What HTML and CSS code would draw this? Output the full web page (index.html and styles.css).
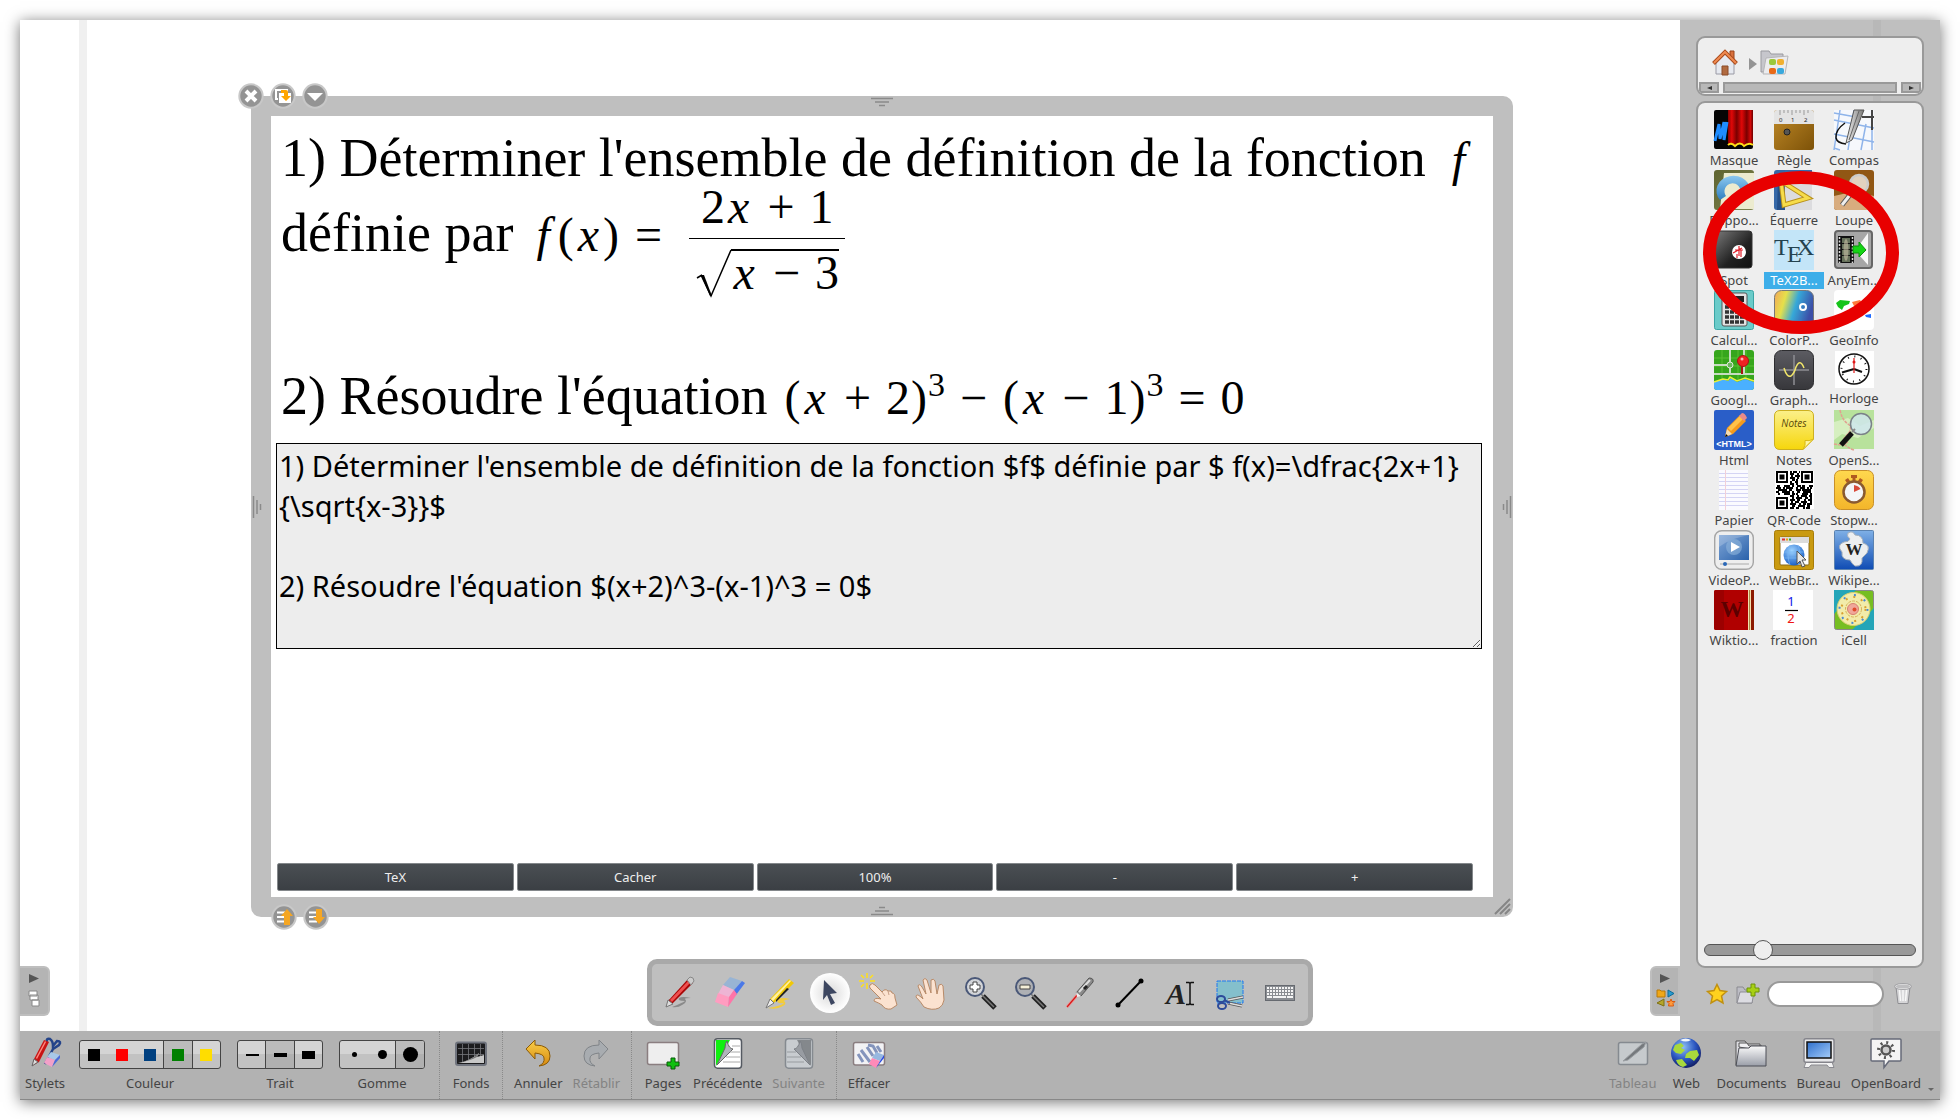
FILE: index.html
```html
<!DOCTYPE html>
<html lang="fr">
<head>
<meta charset="utf-8">
<meta name="viewport" content="width=device-width, initial-scale=1">
<title>OpenBoard</title>
<link rel="stylesheet" href="styles.css">
</head>
<body>
<svg class="defs" width="0" height="0" aria-hidden="true">
  <defs>
    <linearGradient id="g-red" x1="0" x2="1" y1="0" y2="0"><stop offset="0" stop-color="#8a0000"/><stop offset=".15" stop-color="#e00808"/><stop offset=".35" stop-color="#7a0000"/><stop offset=".55" stop-color="#e00808"/><stop offset=".75" stop-color="#7a0000"/><stop offset=".9" stop-color="#d00808"/><stop offset="1" stop-color="#6a0000"/></linearGradient>
    <linearGradient id="g-wood" x1="0" x2="1" y1="0" y2="1"><stop offset="0" stop-color="#c08a28"/><stop offset="1" stop-color="#7d5208"/></linearGradient>
    <linearGradient id="g-olive" x1="0" x2="1" y1="0" y2="1"><stop offset="0" stop-color="#5f6430"/><stop offset="1" stop-color="#7d8350"/></linearGradient>
    <linearGradient id="g-steel" x1="0" x2="1" y1="0" y2="0"><stop offset="0" stop-color="#f2f2f2"/><stop offset="1" stop-color="#777"/></linearGradient>
    <linearGradient id="g-dark" x1="0" x2="1" y1="0" y2="1"><stop offset="0" stop-color="#7a7a7a"/><stop offset=".6" stop-color="#222"/><stop offset="1" stop-color="#111"/></linearGradient>
    <linearGradient id="g-sky" x1="0" x2="0" y1="0" y2="1"><stop offset="0" stop-color="#8cc8f0"/><stop offset="1" stop-color="#2f7fc0"/></linearGradient>
    <linearGradient id="g-rain" x1="0" x2="1" y1="0" y2=".3"><stop offset="0" stop-color="#f2a65a"/><stop offset=".3" stop-color="#e6e04a"/><stop offset=".6" stop-color="#36a8d8"/><stop offset="1" stop-color="#3c4fa8"/></linearGradient>
    <linearGradient id="g-graph" x1="0" x2="0" y1="0" y2="1"><stop offset="0" stop-color="#5c5c62"/><stop offset="1" stop-color="#37373b"/></linearGradient>
    <linearGradient id="g-note" x1="0" x2="0" y1="0" y2="1"><stop offset="0" stop-color="#fbf08a"/><stop offset="1" stop-color="#f6d60c"/></linearGradient>
    <linearGradient id="g-amber" x1="0" x2="0" y1="0" y2="1"><stop offset="0" stop-color="#ffd84e"/><stop offset="1" stop-color="#f3b52a"/></linearGradient>
    <linearGradient id="g-vid" x1="0" x2="1" y1="0" y2="1"><stop offset="0" stop-color="#7fa5d6"/><stop offset="1" stop-color="#2a62ab"/></linearGradient>
    <linearGradient id="g-wiki" x1="0" x2="0" y1="0" y2="1"><stop offset="0" stop-color="#7fb0e6"/><stop offset="1" stop-color="#0f4cb4"/></linearGradient>
    <linearGradient id="g-orange" x1="0" x2="0" y1="0" y2="1"><stop offset="0" stop-color="#f9cf4a"/><stop offset="1" stop-color="#d88a10"/></linearGradient>
    <linearGradient id="g-silver" x1="0" x2="0" y1="0" y2="1"><stop offset="0" stop-color="#fafafa"/><stop offset="1" stop-color="#9a9ea8"/></linearGradient>
    <linearGradient id="g-screen" x1="0" x2="1" y1="0" y2="1"><stop offset="0" stop-color="#2e6fcc"/><stop offset="1" stop-color="#a5cdfa"/></linearGradient>
    <radialGradient id="g-ball" cx=".4" cy=".3" r=".7"><stop offset="0" stop-color="#9fd4ff"/><stop offset="1" stop-color="#1c62c8"/></radialGradient>
    <radialGradient id="g-earth" cx=".4" cy=".3" r=".7"><stop offset="0" stop-color="#8fc0f5"/><stop offset=".6" stop-color="#2a55c0"/><stop offset="1" stop-color="#12206a"/></radialGradient>
    <radialGradient id="g-spot"><stop offset=".3" stop-color="#e4e4e4"/><stop offset="1" stop-color="#fff"/></radialGradient>
  </defs>
</svg>

<div class="screen">
  <div class="workspace">
    <main class="board">
      <section class="widget" aria-label="TeX2Board">
        <div class="handles handles-top">
          <button class="round" aria-label="Fermer"><svg viewBox="0 0 26 26"><circle cx="13" cy="13" r="11.7" fill="#949494" stroke="#c8c8c8" stroke-width="2"/><path d="M8 8l10 10M18 8L8 18" stroke="#fff" stroke-width="4"/></svg></button>
          <button class="round" aria-label="Dupliquer"><svg viewBox="0 0 26 26"><circle cx="13" cy="13" r="11.7" fill="#949494" stroke="#c8c8c8" stroke-width="2"/><path d="M8 16H6V7h11v2" fill="none" stroke="#fff" stroke-width="2"/><path d="M9 10h12v10H9z" fill="#fff"/><path d="M11 7h5q2 0 2 2v4h3l-5 5-5-5h3v-3h-3z" fill="#ffa500"/></svg></button>
          <button class="round" aria-label="Menu"><svg viewBox="0 0 26 26"><circle cx="13" cy="13" r="11.7" fill="#949494" stroke="#c8c8c8" stroke-width="2"/><path d="M5 10h16l-8 8z" fill="#fff"/></svg></button>
        </div>
        <svg class="grip grip-top" viewBox="0 0 22 10"><path d="M0 1.500h22M4 5h14M8 8.500h6" stroke="#8a8a8a" stroke-width="1.500"/></svg>
        <svg class="grip grip-bottom" viewBox="0 0 22 10"><path d="M0 8.500h22M4 5h14M8 1.500h6" stroke="#8a8a8a" stroke-width="1.500"/></svg>
        <svg class="grip grip-left" viewBox="0 0 10 22"><path d="M1.500 0v22M5 4v14M8.500 8v6" stroke="#8a8a8a" stroke-width="1.500"/></svg>
        <svg class="grip grip-right" viewBox="0 0 10 22"><path d="M8.500 0v22M5 4v14M1.500 8v6" stroke="#8a8a8a" stroke-width="1.500"/></svg>
        <svg class="grip grip-corner" viewBox="0 0 18 18"><path d="M1 16L16 1M6 16L16 6M11 16l5-5" stroke="#858585" stroke-width="2"/></svg>

        <div class="formula">
          <p class="line"><span>1) Déterminer l'ensemble de définition de la fonction</span> <i class="math var-f">f</i></p>
          <div class="line line-fraction">
            <p class="lead"><span>définie par</span> <span class="math"><i class="var-f">f</i><b>(</b><i>x</i><b>)</b><span class="op">=</span></span></p>
            <div class="math fraction">
              <span class="numerator">2<i>x</i><span class="op">+</span>1</span>
              <span class="root"><svg class="radical" viewBox="0 0 35 48"><path d="M1 29l5-3" stroke="#000" stroke-width="1.500" fill="none"/><path d="M5 26l10 21L35 1" fill="none" stroke="#000" stroke-width="1.500"/><path d="M5 26l9 21h2L8 26z"/></svg><span class="radicand"><i>x</i><span class="op">−</span>3</span></span>
            </div>
          </div>
          <p class="line line-last"><span>2) Résoudre l'équation</span> <span class="math"><b>(</b><i>x</i><span class="op">+</span>2<b>)</b><sup>3</sup><span class="op">−</span><b>(</b><i>x</i><span class="op">−</span>1<b>)</b><sup>3</sup><span class="op">=</span>0</span></p>
        </div>
        <textarea class="source" aria-label="Source TeX" spellcheck="false">1) Déterminer l'ensemble de définition de la fonction $f$ définie par $ f(x)=\dfrac{2x+1}{\sqrt{x-3}}$

2) Résoudre l'équation $(x+2)^3-(x-1)^3 = 0$</textarea>
        <div class="actions">
          <button>TeX</button><button>Cacher</button><button>100%</button><button>-</button><button>+</button>
        </div>
        <div class="handles handles-bottom">
          <button class="round" aria-label="Monter"><svg viewBox="0 0 26 26"><circle cx="13" cy="13" r="11.700" fill="#949494" stroke="#c8c8c8" stroke-width="2"/><path d="M6 8.500h8M6 13h8M6 17.500h8" stroke="#fff" stroke-width="2"/><path d="M16 5l6 7h-3v9h-6v-9h-3z" fill="#f5a623"/></svg></button>
          <button class="round" aria-label="Descendre"><svg viewBox="0 0 26 26"><circle cx="13" cy="13" r="11.700" fill="#949494" stroke="#c8c8c8" stroke-width="2"/><path d="M6 8.500h8M6 13h8M6 17.500h8" stroke="#fff" stroke-width="2"/><path d="M16 20l6-7h-3V5h-6v8h-3z" fill="#f5a623"/></svg></button>
        </div>
      </section>
      <button class="tab tab-left" aria-label="Pages"><svg viewBox="0 0 30 50"><path d="M9 8l10 4.500L9 17z" fill="#555"/><path d="M9 25h8v5H9zM10 29h8v5h-8zM12 34h7v6h-7z" fill="#fff" stroke="#888"/></svg></button>
      <button class="tab tab-right" aria-label="Bibliothèque"><svg viewBox="0 0 30 50"><path d="M10 8l10 4.500L10 17z" fill="#555"/><path d="M7 24h3l1 1h4v6H7z" fill="#f0a818" stroke="#b87808"/><path d="M18 24l6 3.500-6 3.500z" fill="#2a9bd0" stroke="#0a6a98"/><path d="M14 33v7l-7-3z" fill="#b5a62a" stroke="#7d7014"/><path d="M21 33l1 2.500h3l-2 2 .5 2.500h-5l.5-2.500-2-2h3z" fill="#ff9a3c" stroke="#d85a10"/></svg></button>
    </main>

    <aside class="library">
      <nav class="crumbs" aria-label="Chemin">
        <div class="path">
          <a href="#" aria-label="Accueil"><svg width="26" height="28" viewBox="0 0 26 28"><path d="M18 2h4v9h-4z" fill="#d8703c" stroke="#9a4218"/><path d="M4 14v11h18V14l-9-9z" fill="#e6e9f0" stroke="#9a9aa5"/><path d="M10 17h6v9h-6z" fill="#b06a40" stroke="#8a4a28"/><path d="M1.500 14.500L13 3l11.500 11.500" fill="none" stroke="#a84a1c" stroke-width="4"/><path d="M2 14L13 3l11 11" fill="none" stroke="#f08a50" stroke-width="2"/></svg></a>
          <svg class="next" width="8" height="12" viewBox="0 0 8 12"><path d="M0 0l8 6-8 6z" fill="#949494"/></svg>
          <a href="#" aria-label="Applications"><svg width="28" height="26" viewBox="0 0 28 26"><path d="M1 22V1h8l2 3h12v18z" fill="#c6c6cc" stroke="#9a9aa0"/><path d="M3 24L6 8l22-2-3 18z" fill="#ececee" stroke="#b5b5b8"/><rect x="9" y="9" width="7" height="6" rx="2" fill="#9cc83c"/><rect x="17" y="9" width="7" height="6" rx="2" fill="#f0b030"/><rect x="9" y="18" width="7" height="6" rx="2" fill="#e86a18"/><rect x="17" y="18" width="7" height="6" rx="2" fill="#38a8dc"/></svg></a>
        </div>
        <div class="scroller">
          <button aria-label="Gauche"><svg width="5" height="4" viewBox="0 0 5 4"><path d="M5 0v4L0 2z" fill="#333"/></svg></button>
          <div class="scroll-thumb"></div>
          <button aria-label="Droite"><svg width="5" height="4" viewBox="0 0 5 4"><path d="M0 0v4l5-2z" fill="#333"/></svg></button>
        </div>
      </nav>

      <section class="shelf">
        <ul class="apps">
          <li><a href="#"><svg viewBox="0 0 40 40"><rect width="39" height="39" rx="2" fill="#050505"/><path d="M14 0h25v35q-4-5-8 1-5-5-9 0-4-4-8-2z" fill="url(#g-red)"/><path d="M14 35q3-3 7 1 5-5 9 0 5-4 9-1" fill="none" stroke="#ffe01a" stroke-width="2"/><path d="M1 31L5 14l1 15 4-17v18l3-18" fill="none" stroke="#1e8cff" stroke-width="3"/></svg>Masque</a></li>
          <li><a href="#"><svg viewBox="0 0 40 40"><rect width="40" height="40" rx="3" fill="url(#g-wood)"/><path d="M0 14V3q0-3 3-3h34q3 0 3 3v11z" fill="#e4e4e4"/><path d="M6 0v5M10 0v3M14 0v3M18 0v5M22 0v3M26 0v3M30 0v5M34 0v3" stroke="#999"/><circle cx="13" cy="22" r="3" fill="#555" stroke="#222"/><g font-family="Noto Sans" font-size="6" fill="#222"><text x="5" y="12">0</text><text x="17" y="12">1</text><text x="30" y="12">2</text></g></svg>Règle</a></li>
          <li><a href="#"><svg viewBox="0 0 40 40"><rect width="40" height="40" fill="#f6f8fc"/><path d="M0 10l40 8M0 24l40 8M6 0L0 40M20 0l-6 40M32 14l-5 26M0 3l22 4M0 38l6 2M38 10v30" stroke="#8fb4ea" stroke-width="1.500"/><path d="M11 13Q1 20 2 28q1 5 10 6" fill="none" stroke="#111" stroke-width="1.500"/><path d="M20 0h10L18 30l-6 3z" fill="url(#g-steel)" stroke="#555"/><path d="M25 1L15 30" stroke="#666"/><path d="M28 7h12M38 0v20" stroke="#444" stroke-width="2"/></svg>Compas</a></li>
          <li><a href="#"><svg viewBox="0 0 40 40"><rect width="40" height="40" rx="3" fill="url(#g-olive)"/><path d="M10 3h30v36H6z" fill="#ecebcf"/><path d="M6 30a17 15 0 1 1 30-6H26a8 8 0 1 0-14 2z" fill="url(#g-sky)"/></svg>Rappo...</a></li>
          <li><a href="#"><svg viewBox="0 0 40 40"><path d="M3 0h35v40H3q-3 0-3-3V3q0-3 3-3z" fill="#dcdcde"/><path d="M3 0h8v40H3q-3 0-3-3V3q0-3 3-3z" fill="#3568a8"/><path d="M11 0h27v9H11z" fill="#356cae"/><path d="M4 6l7 34H3z" fill="#24508a"/><path d="M7 11L34 28 10 35z" fill="none" stroke="#b8901a" stroke-width="5"/><path d="M7 11L34 28 10 35z" fill="none" stroke="#f6dc4a" stroke-width="3"/></svg>Équerre</a></li>
          <li><a href="#"><svg viewBox="0 0 40 40"><rect width="40" height="40" rx="3" fill="#915714"/><path d="M0 26q20-6 40 0v11q0 3-3 3H3q-3 0-3-3z" fill="#d8ac7e"/><circle cx="25" cy="14" r="9" fill="#e2d2bf" stroke="#ccc" stroke-width="2.500"/><path d="M19 21L8 35" stroke="#555" stroke-width="5"/><path d="M19 21L8 35" stroke="#eee" stroke-width="3"/></svg>Loupe</a></li>
          <li><a href="#"><svg viewBox="0 0 40 40"><rect x="1" y="1" width="37" height="37" rx="3" fill="url(#g-dark)" stroke="#333"/><circle cx="25" cy="22" r="7" fill="#fff"/><path d="M19 23l9-5M25 16v10M21 20h8M27 20v7M23 28v-4" stroke="#e0202a" stroke-width="1.200"/></svg>Spot</a></li>
          <li class="selected"><a href="#"><svg viewBox="0 0 40 40"><rect width="40" height="40" fill="#c3e5f8"/><g font-family="Liberation Serif" font-size="24" fill="#24424f"><text x="0" y="25">T</text><text x="13" y="32">E</text><text x="23" y="25">X</text></g></svg>TeX2B...</a></li>
          <li><a href="#"><svg viewBox="0 0 40 40"><rect x="1" y="1" width="37" height="37" rx="3" fill="#a6a6a6" stroke="#666" stroke-width="2"/><path d="M26 14L34 3v32l-8-9z" fill="#f6f6f6"/><path d="M4 6h16v27H4z" fill="#111"/><path d="M5.500 7v26M18.500 7v26" stroke="#ddd" stroke-width="1.500" stroke-dasharray="2 1.500"/><path d="M8 8h8v5H8zM8 14h8v5H8zM8 20h8v5H8zM8 26h8v6H8z" fill="#65705a"/><ellipse cx="12" cy="20" rx="2.500" ry="11" fill="#c9c0a5" opacity=".6"/><path d="M19 16h6v-4l7 8-7 7v-4h-6z" fill="#14d414" stroke="#0a900a"/></svg>AnyEm...</a></li>
          <li><a href="#"><svg viewBox="0 0 40 40"><rect x=".5" y=".5" width="39" height="39" rx="2" fill="#6acbc9" stroke="#3aa5a5"/><rect x="8" y="3" width="25" height="33" rx="2" fill="#e2e2e2" stroke="#555"/><path d="M11 6h19v6H11z" fill="#222"/><path d="M11 17h19M11 22h19M11 27h19M11 32h19" stroke="#333" stroke-width="3.500" stroke-dasharray="4 1"/></svg>Calcul...</a></li>
          <li><a href="#"><svg viewBox="0 0 40 40"><rect x=".5" y=".5" width="39" height="39" rx="7" fill="url(#g-rain)" stroke="#777"/><circle cx="29" cy="17" r="3" fill="none" stroke="#fff" stroke-width="2"/></svg>ColorP...</a></li>
          <li><a href="#"><svg viewBox="0 0 40 40"><rect width="40" height="40" rx="4" fill="#fff"/><path d="M2 13l4-3 10 1-1 3-5 2-2 4-4-3zM9 22l5 2-2 8-2-2z" fill="#16c41a"/><path d="M18 12l8-2 2 3-4 4-4-1z" fill="#ff7a3c"/><path d="M18 20l6-1 1 5-4 6z" fill="#f5c000"/><path d="M26 12l12 1v5l-8 4z" fill="#e83a3a"/><path d="M31 25l6-1v4l-5-1z" fill="#1e6aff"/></svg>GeoInfo</a></li>
          <li><a href="#"><svg viewBox="0 0 40 40"><rect width="40" height="40" rx="3" fill="#36a61c"/><path d="M0 8h40M0 16h40M8 0v30M24 0v30M32 0v30" stroke="#58c030"/><path d="M16 0v24M0 24h40M30 0v24M0 15h16" stroke="#c6dcc0" stroke-width="2"/><circle cx="16" cy="15" r="3" fill="#6ab85a" stroke="#dfe8da"/><path d="M0 32l9-3 5 2 3-3 6 4 8-3 9 3v5q0 3-3 3H3q-3 0-3-3z" fill="#4ab0ff"/><path d="M0 32l9-3 5 1 2-3 7 4 8-3 9 3" fill="none" stroke="#eaf03c" stroke-width="1.500"/><path d="M28 24V15" stroke="#a81414" stroke-width="2"/><circle cx="29" cy="11" r="5.500" fill="#ee2222" stroke="#a81414"/><circle cx="28" cy="9" r="1.500" fill="#ffb0b0"/></svg>Googl...</a></li>
          <li><a href="#"><svg viewBox="0 0 40 40"><rect x=".5" y=".5" width="39" height="39" rx="7" fill="url(#g-graph)" stroke="#2d2d30"/><path d="M20 5v30M5 20h30" stroke="#8d8d92" stroke-width="1.500"/><path d="M10 18q3 10 7 8 3-2 5-9 4-9 8 1" fill="none" stroke="#f2e66a" stroke-width="1.500"/></svg>Graph...</a></li>
          <li class="short"><a href="#"><svg viewBox="0 0 40 38"><path d="M1 1h39v37H1z" fill="#fff"/><circle cx="20" cy="19" r="15" fill="#fff" stroke="#111" stroke-width="1.500"/><circle cx="20" cy="19" r="12.500" fill="none" stroke="#111" stroke-width="2" stroke-dasharray="1 5.545"/><path d="M20 19L8 22.500M20 19l8 3" stroke="#111" stroke-width="2"/><path d="M20 23V8" stroke="#e01818" stroke-width="1.200"/><circle cx="20" cy="12" r="1.500" fill="#e01818"/></svg>Horloge</a></li>
          <li><a href="#"><svg viewBox="0 0 40 40"><rect width="40" height="40" rx="2" fill="#2a5ec8"/><path d="M11 27l2-9L26 5l6 6-13 13z" fill="#f59a1c"/><path d="M14 18L27 5l3 3-13 13z" fill="#ffc24a"/><path d="M25 6l3-3q3 0 5 5l-3 3z" fill="#e88a8a"/><path d="M11 27l2-8 5 5z" fill="#f5dcb0"/><path d="M11 27l1-3 2 2z"/><text x="20" y="37" font-family="Liberation Sans" font-size="9" font-weight="700" fill="#fff" text-anchor="middle">&lt;HTML&gt;</text></svg>Html</a></li>
          <li><a href="#"><svg viewBox="0 0 40 40"><path d="M6 .5h28q5.500 0 5.500 5.500v23L29 39.500H6Q.5 39.500.5 34V6Q.5.500 6 .5z" fill="url(#g-note)" stroke="#cdb020"/><path d="M29 39.500q3-4 2-9 4 1 8.500-1.500z" fill="#fff6a0" stroke="#d8b818"/><text x="20" y="17" font-family="Open Sans" font-size="10" font-style="italic" fill="#5a4a08" text-anchor="middle">Notes</text></svg>Notes</a></li>
          <li><a href="#"><svg viewBox="0 0 40 40"><path d="M0 0h40v39H0z" fill="#b8e29c"/><path d="M0 12l14-4 12 8 14-6v8L24 28 8 24 0 30z" fill="#d6efc0"/><path d="M6 0q2 10 8 14t-2 12 8 14M0 34q8 2 14-2" fill="none" stroke="#e2a090" stroke-width="1.500" stroke-dasharray="3 1"/><circle cx="27" cy="14" r="10.500" fill="#cfe6ec" fill-opacity=".85" stroke="#7a8288" stroke-width="1.500"/><path d="M18 22l3-3" stroke="#888" stroke-width="2"/><path d="M7 35l11-12" stroke="#111" stroke-width="5"/></svg>OpenS...</a></li>
          <li><a href="#"><svg viewBox="0 0 40 40"><path d="M5 0h29v40H5z" fill="#fafaff"/><path d="M5 3.500h29M5 7.500h29M5 11.500h29M5 15.500h29M5 19.500h29M5 23.500h29M5 27.500h29M5 31.500h29M5 35.500h29" stroke="#d4d4f4"/><path d="M11.500 0v40" stroke="#f2d0d8"/></svg>Papier</a></li>
          <li><a href="#"><svg viewBox="0 0 40 40"><path d="M1 1h39v38H1z" fill="#fff"/><path d="M3 2h10v10H3zM28 2h10v10H28zM3 28h10v10H3z" fill="none" stroke="#000" stroke-width="2"/><path d="M5.500 4.500h5v5h-5zM30.500 4.500h5v5h-5zM5.500 30.500h5v5h-5z"/><g stroke="#000" stroke-width="2"><path d="M16 2h10" stroke-dasharray="2 1 4 2"/><path d="M16 4h10" stroke-dasharray="4 3 2"/><path d="M17 6h9" stroke-dasharray="2 2 5"/><path d="M16 8h10" stroke-dasharray="5 2 2"/><path d="M18 10h8" stroke-dasharray="3 1 2"/><path d="M16 12h10" stroke-dasharray="2 3 3"/><path d="M16 14h8" stroke-dasharray="4 2"/><path d="M3 16h36" stroke-dasharray="3 4 6 2 2 3 4 1"/><path d="M2 18h36" stroke-dasharray="5 2 2 1 7 3 2 2"/><path d="M4 20h34" stroke-dasharray="9 2 3 4 5 1"/><path d="M2 22h36" stroke-dasharray="3 3 8 2 2 3"/><path d="M4 24h34" stroke-dasharray="2 4 6 2 3 1"/><path d="M16 26h22" stroke-dasharray="4 3 2 2 6 2"/><path d="M18 28h20" stroke-dasharray="2 2 6 3 3 2"/><path d="M16 30h22" stroke-dasharray="5 2 3 4 2 2"/><path d="M17 32h21" stroke-dasharray="2 2 4 2 6 3"/><path d="M16 34h22" stroke-dasharray="6 3 2 2 3 1"/><path d="M18 36h20" stroke-dasharray="3 3 7 2"/><path d="M16 38h22" stroke-dasharray="4 2 3 4 2 1"/></g></svg>QR-Code</a></li>
          <li><a href="#"><svg viewBox="0 0 40 40"><rect x=".5" y=".5" width="39" height="39" rx="6" fill="url(#g-amber)" stroke="#c8902a"/><path d="M17 5h6v3h-6zM18.500 7h3v4h-3zM11 10l3-2 2 3-3 2zM29 10l-3-2-2 3 3 2z" fill="#b05a20"/><circle cx="20" cy="22" r="10.500" fill="#f4f6f8" stroke="#8a5a30" stroke-width="2.500"/><path d="M20 22v-7q5 1 6.500 4z" fill="#d84a3a"/></svg>Stopw...</a></li>
          <li><a href="#"><svg viewBox="0 0 40 40"><rect x=".7" y=".7" width="38.600" height="38.600" rx="7" fill="#eee" stroke="#a5a5a5" stroke-width="1.400"/><path d="M5 5h30v25H5z" fill="url(#g-vid)"/><path d="M5 5h30q-18 3-30 12z" fill="#fff" opacity=".2"/><circle cx="20" cy="17" r="8" fill="#8fb5dc" opacity=".6"/><path d="M17 12l9 5-9 5z" fill="#fff"/><path d="M6 34h29" stroke="#aaa"/><circle cx="11" cy="34" r="2" fill="#2a68b8"/></svg>VideoP...</a></li>
          <li><a href="#"><svg viewBox="0 0 40 40"><rect x=".5" y=".5" width="39" height="39" rx="2" fill="#c99a10" stroke="#a87c08"/><rect x="6" y="7" width="29" height="28" rx="1" fill="#fff" stroke="#8a6a18"/><path d="M6 7h29v6H6z" fill="#dcdcdc"/><path d="M8 9.500h3" stroke="#e03030" stroke-width="2"/><path d="M12 9.500h2" stroke="#f0a010" stroke-width="2"/><path d="M15 9.500h2" stroke="#30b030" stroke-width="2"/><circle cx="20" cy="25" r="10.500" fill="url(#g-ball)"/><path d="M10 22h20M10 28h20M16 15q-4 10 0 20M24 15q4 10 0 20" fill="none" stroke="#7ab8f5" stroke-width=".7"/><path d="M23 21l9 9h-4l3 6-3 1-2-6-3 3z" fill="#e8e8e8" stroke="#555"/></svg>WebBr...</a></li>
          <li><a href="#"><svg viewBox="0 0 40 40"><rect x=".5" y=".5" width="39" height="39" rx="1" fill="url(#g-wiki)" stroke="#5a82b0"/><path d="M14 3q5-3 7 2 8 0 8 8 8 2 4 10-4 4-5 5 1 9-7 8-3-2-5-6-9 0-8-8-6-7 2-10 5 0 6-3-4-3-2-6z" fill="#eceef0" stroke="#a5b0bc"/><text x="20" y="25" font-family="Liberation Serif" font-size="17" font-weight="700" fill="#222" text-anchor="middle">W</text></svg>Wikipe...</a></li>
          <li><a href="#"><svg viewBox="0 0 40 40"><rect width="40" height="40" rx="2" fill="#f2dfae"/><path d="M2 0h32v40H2q-2 0-2-2V2q0-2 2-2z" fill="#b00000"/><path d="M2 0h8v40H2q-2 0-2-2V2q0-2 2-2z" fill="#9c0000"/><path d="M38.500 0v40" stroke="#8c1a00" stroke-width="3"/><path d="M35.500 0v40" stroke="#a88a4a"/><text x="18" y="27" font-family="Liberation Serif" font-size="23" font-weight="700" fill="#5c0000" text-anchor="middle">W</text></svg>Wiktio...</a></li>
          <li><a href="#"><svg viewBox="0 0 40 40"><path d="M-1 0h40v40H-1z" fill="#fff"/><g font-family="Noto Sans" font-size="13" text-anchor="middle"><text x="17" y="16" fill="#1414e8">1</text><text x="17" y="33" fill="#f01414">2</text></g><path d="M11 20.500h13" stroke="#000" stroke-width="1.200"/></svg>fraction</a></li>
          <li><a href="#"><svg viewBox="0 0 40 40"><rect x=".5" y=".5" width="39" height="39" rx="2" fill="#76be22" stroke="#888"/><path d="M0 0h22L0 24zM40 40H18l22-22z" fill="#24a5b8"/><circle cx="19.500" cy="19" r="16.500" fill="#f2ecaa" stroke="#d8d070"/><circle cx="19.500" cy="19" r="12" fill="none" stroke="#d8a030" stroke-width="2" stroke-dasharray="2 6"/><circle cx="19.500" cy="19" r="14" fill="none" stroke="#4a8ad0" stroke-width="2" stroke-dasharray="2 9"/><circle cx="19.500" cy="19" r="8" fill="none" stroke="#d8b05a" stroke-dasharray="3 1"/><circle cx="19" cy="19" r="5.500" fill="#f0a89a" stroke="#d88070"/><circle cx="20.500" cy="19.500" r="2" fill="#e04a2a"/></svg>iCell</a></li>
        </ul>
        <input class="zoom" type="range" min="0" max="100" value="25" aria-label="Taille des vignettes">
      </section>

      <div class="library-tools">
        <button aria-label="Favoris"><svg width="22" height="22" viewBox="0 0 22 22"><path d="M11 1.500l3 6 6.500 1-5 4.500 1.500 7-6-3.500L5 20l1.500-7-5-4.500 6.500-1z" fill="#ffd21e" stroke="#c09010" stroke-width="1.500"/></svg></button>
        <button aria-label="Nouveau dossier"><svg width="24" height="22" viewBox="0 0 24 22"><path d="M1 20V4h6l2 3h7v13z" fill="#bcbcc4" stroke="#8a8a90"/><path d="M1 20L4 9h14l-2 11z" fill="#dcdce2" stroke="#8e8e95"/><path d="M15 1h4v4h4v4h-4v4h-4V9h-4V5h4z" fill="#a8d014" stroke="#6c9408"/></svg></button>
        <input class="search" type="search" aria-label="Rechercher">
        <button aria-label="Corbeille"><svg width="18" height="22" viewBox="0 0 18 22"><path d="M2 4h14l-2 16.500H4z" fill="#d6d6d8" stroke="#8e8e92"/><path d="M5.500 7l1 11M9 7v11M12.500 7l-1 11" stroke="#f8f8f8" stroke-width="1.500"/><ellipse cx="9" cy="3.500" rx="8" ry="2.500" fill="#bebec0" stroke="#f2f2f2"/><ellipse cx="9" cy="3.500" rx="8.500" ry="3" fill="none" stroke="#8a8a8e" stroke-width=".7"/></svg></button>
      </div>
      <div class="callout" aria-hidden="true"></div>
    </aside>
  </div>

  <div class="palette-dock">
    <div class="palette" role="toolbar" aria-label="Outils">
      <button aria-label="Stylo"><svg viewBox="0 0 40 40"><path d="M12 34q10-4 13-6-8 0-6-3 3-2 12 0-6 0-6 1 3 3-3 6-4 3-10 2z" fill="#8a8a8a"/><path d="M6 34l3-8 3 4z" fill="#666"/><path d="M8 28L28 6l5 4-21 21z" fill="#a80808"/><path d="M10 27L29 7l2 2-19 20z" fill="#f05050"/><path d="M27 7l3-3q4 0 4 4l-3 4z" fill="#ccc" stroke="#888"/><path d="M6 34l2-7 5 4z" fill="#ddd" stroke="#777"/></svg></button>
      <button aria-label="Gomme"><svg viewBox="0 0 40 40"><path d="M20 4l12 4-8 9-11-5z" fill="#98b4d4"/><path d="M32 8l3 2-9 12-2-5z" fill="#4a78e8"/><path d="M13 12l11 5-5 8-11-4z" fill="#eeb4d4"/><path d="M8 20l11 4-1 10-13-5z" fill="#ff9cc0"/><path d="M24 17l3 4-9 13 1-10z" fill="#ff74a8"/></svg></button>
      <button aria-label="Marqueur"><svg viewBox="0 0 40 40"><path d="M8 35q13-2 16-5-9 1-6-4 4-2 12 0-6 1-6 2 4 3-3 6-6 3-13 1z" fill="#f2cc3c"/><path d="M10 26L29 6l5 4-21 21z" fill="#f0c808"/><path d="M11 26L30 7l1 1-18 20z" fill="#fff0a0"/><path d="M16 27L27 15l2 1-13 13z" fill="#222"/><path d="M6 35l4-9 4 4z" fill="#eee" stroke="#777"/></svg></button>
      <button class="active" aria-label="Sélection"><svg viewBox="0 0 40 40"><circle cx="20" cy="20" r="20" fill="url(#g-spot)"/><path d="M14 7l13 13-7 1 5 9-4 2-4-10-4 5z" fill="#3c4660"/></svg></button>
      <button aria-label="Interaction"><svg viewBox="0 0 40 40"><path d="M7 0v5M7 10v6M-1 8h5M10 8h5M1 2l3 3M13 2l-3 3M1 14l3-3" stroke="#ffe01a" stroke-width="1.500"/><path d="M10 12q2-3 5 0l7 7q3-4 6-1 4-1 4 2 3 0 3 5l2 7-6 4q-6 1-9-4-3-2-8-4 0-4 7-2L10 15q-1-2 0-3z" fill="#fbe2d0" stroke="#b88a68"/><path d="M22 19l3 4M28 18l1 4" stroke="#c8a088"/></svg></button>
      <button aria-label="Main"><svg viewBox="0 0 40 40"><path d="M14 34q-3-5-8-10 0-4 5 0l2 2L8 13q1-3 4 1l4 7-3-14q2-3 4 0l4 13V7q3-2 4 1l2 13 2-9q3-2 4 1l1 14q-1 6-5 8-7 3-15-1z" fill="#fbe2d0" stroke="#b88a68"/></svg></button>
      <button aria-label="Agrandir"><svg viewBox="0 0 40 40"><path d="M23 23l12 12" stroke="#222" stroke-width="5"/><path d="M21 21l13 13" stroke="#777" stroke-width="1.500"/><circle cx="15" cy="14" r="9" fill="#d2d4d8" stroke="#4a5878" stroke-width="2"/><path d="M13 9h4v3h3v4h-3v3h-4v-3h-3v-4h3z" fill="#fff" stroke="#444"/></svg></button>
      <button aria-label="Réduire"><svg viewBox="0 0 40 40"><path d="M23 23l12 12" stroke="#222" stroke-width="5"/><path d="M21 21l13 13" stroke="#777" stroke-width="1.500"/><circle cx="15" cy="14" r="9" fill="#aeb0b4" stroke="#4a5878" stroke-width="2"/><path d="M10 12h10v4H10z" fill="#f5f0d8" stroke="#444"/></svg></button>
      <button aria-label="Laser"><svg viewBox="0 0 40 40"><path d="M7 34l12-14" stroke="#ff8080" stroke-width="3" opacity=".6"/><path d="M7 34l12-14" stroke="#d81818" stroke-width="1.200"/><path d="M16 20L29 5q5 0 4 4L21 23z" fill="#8a8a8a" stroke="#555"/><path d="M19 19L30 7" stroke="#ddd" stroke-width="2"/><path d="M16 19l5 4-4 1z" fill="#eee"/><path d="M24 16l3-3" stroke="#222" stroke-width="3"/></svg></button>
      <button aria-label="Ligne"><svg viewBox="0 0 40 40"><path d="M8 32L31 8" stroke="#000" stroke-width="2"/><circle cx="8" cy="32" r="2.500"/><circle cx="31" cy="8" r="2.500"/></svg></button>
      <button aria-label="Texte"><svg viewBox="0 0 40 40"><text x="6" y="31" font-family="Liberation Serif" font-size="30" font-weight="700" font-style="italic" fill="#222">A</text><path d="M26 9.500h3l1 1 1-1h3M30 10v21M26 31.500h3l1-1 1 1h3" fill="none" stroke="#111" stroke-width="1.500"/></svg></button>
      <button aria-label="Capture"><svg viewBox="0 0 40 40"><path d="M7 8h26v22H7z" fill="#84bfcc" stroke="#1e78f0" stroke-dasharray="4 1"/><path d="M18 27l15-3M18 30l14 3" stroke="#555" stroke-width="3"/><path d="M18 27l15-3M18 30l14 3" stroke="#ddd" stroke-width="1.500"/><ellipse cx="11" cy="26" rx="4" ry="3" fill="none" stroke="#2c4a9a" stroke-width="2"/><ellipse cx="12" cy="33" rx="4" ry="3" fill="none" stroke="#2c4a9a" stroke-width="2"/><path d="M14 27l6 3" stroke="#2c4a9a" stroke-width="2"/></svg></button>
      <button aria-label="Clavier"><svg viewBox="0 0 40 40"><rect x="5.500" y="12.500" width="29" height="15" fill="#8a8d92" stroke="#666a70"/><path d="M7 15h26M7 18h26M7 21h26" stroke="#f5f5f5" stroke-width="2" stroke-dasharray="2 1"/><path d="M7 24h5M13 24h13M27 24h6" stroke="#f5f5f5" stroke-width="2"/></svg></button>
    </div>
  </div>

  <footer class="toolbar">
    <button class="tool"><svg viewBox="0 0 36 30"><path d="M20 4q-1-4 3-3 3 2 3 7l4-5q5 0 2 4l-6 4-8 15" fill="none" stroke="#24448a" stroke-width="2.500"/><path d="M5 28l2-7L17 2l5 2-10 20z" fill="#c81414"/><path d="M9 20L18 3l1 1-9 17z" fill="#ff8a80"/><path d="M5 28l2-7 4 3z" fill="#ddd" stroke="#666"/><path d="M24 14l9 3-5 5-8-3z" fill="#a8c8e8"/><path d="M20 19l8 3-3 7-8-4z" fill="#f2a0c8"/><path d="M33 17v3l-8 9 3-7z" fill="#4a6ad8"/></svg>Stylets</button>
    <fieldset class="group">
      <div class="choices">
        <label><input type="radio" name="couleur" aria-label="Noir"><span class="swatch black"></span></label>
        <label><input type="radio" name="couleur" aria-label="Rouge"><span class="swatch red"></span></label>
        <label><input type="radio" name="couleur" aria-label="Bleu"><span class="swatch blue"></span></label>
        <label><input type="radio" name="couleur" aria-label="Vert" checked><span class="swatch green"></span></label>
        <label><input type="radio" name="couleur" aria-label="Jaune"><span class="swatch yellow"></span></label>
      </div>
      <span class="caption">Couleur</span>
    </fieldset>
    <fieldset class="group">
      <div class="choices">
        <label><input type="radio" name="trait" aria-label="Fin"><span class="stroke thin"></span></label>
        <label><input type="radio" name="trait" aria-label="Moyen" checked><span class="stroke medium"></span></label>
        <label><input type="radio" name="trait" aria-label="Épais"><span class="stroke thick"></span></label>
      </div>
      <span class="caption">Trait</span>
    </fieldset>
    <fieldset class="group">
      <div class="choices">
        <label><input type="radio" name="gomme" aria-label="Petite"><span class="dot small"></span></label>
        <label><input type="radio" name="gomme" aria-label="Moyenne"><span class="dot mid"></span></label>
        <label><input type="radio" name="gomme" aria-label="Grande" checked><span class="dot large"></span></label>
      </div>
      <span class="caption">Gomme</span>
    </fieldset>
    <span class="divider"></span>
    <button class="tool"><svg viewBox="0 0 36 30"><rect x="3" y="4.500" width="30" height="22.500" rx="2" fill="#1c1c1e" stroke="#70747e" stroke-width="2"/><path d="M5 10.500h26M5 16.500h26M9.500 6v19M15.500 6v19M21.500 6v19M27.500 6v19" stroke="#77797c" stroke-width=".8"/><path d="M5 25q12-2 21-10l-2 4 7-2v8z" fill="#c8c8c8"/><path d="M5 25q12-2 21-10l-2 4q-8 4-19 6z" fill="#777"/></svg>Fonds</button>
    <span class="divider"></span>
    <button class="tool"><svg viewBox="0 0 36 30"><path d="M6 11L15 2v5q15 0 15 11 0 9-11 10 6-3 5-8 0-4-9-5v6z" fill="url(#g-orange)" stroke="#8a5a08"/></svg>Annuler</button>
    <button class="tool" disabled><svg viewBox="0 0 36 30"><path d="M30 11L21 2v5Q6 7 6 18q0 9 11 10-6-3-5-8 0-4 9-5v6z" fill="#a8acb0" stroke="#808488"/></svg>Rétablir</button>
    <span class="divider"></span>
    <button class="tool"><svg viewBox="0 0 36 30"><rect x="2.500" y="4.500" width="31" height="22" rx="2" fill="#eee" stroke="#8a7e80" stroke-width="1.500"/><path d="M26 20h4v4h4v4h-4v3h-4v-3h-4v-4h4z" fill="#10c010" stroke="#0a5a0a"/></svg>Pages</button>
    <button class="tool"><svg viewBox="0 0 36 30"><rect x="4.500" y=".8" width="27" height="29.400" rx="3" fill="#fff" stroke="#555a62" stroke-width="1.500"/><path d="M6 2h14L6 28z" fill="#10f010"/><path d="M7 27L15 10q0-5 2-7 2 8 6 8z" fill="#b0b4ba" stroke="#666"/><path d="M22 8h8M20 14h10M16 19h14M13 24h17" stroke="#aaa"/></svg>Précédente</button>
    <button class="tool" disabled><svg viewBox="0 0 36 30"><rect x="4.500" y=".8" width="27" height="29.400" rx="3" fill="#c8ccd0" stroke="#858a90" stroke-width="1.500"/><path d="M16 2h14v26z" fill="#84888c"/><path d="M29 27L21 10q0-5-2-7-2 8-6 8z" fill="#989ca2" stroke="#7c8086"/><path d="M6 14h9M6 19h14M6 24h17" stroke="#989ca0"/></svg>Suivante</button>
    <span class="divider"></span>
    <button class="tool"><svg viewBox="0 0 36 30"><rect x="2.500" y="4.500" width="31" height="22.500" rx="2" fill="#f2f2f4" stroke="#8a7e80" stroke-width="1.500"/><path d="M7 16l5 8M10 12l9 12M16 9l6 9M17 7l5 1 4 7M26 8l4 6" fill="none" stroke="#8494bc" stroke-width="3"/><path d="M25 14l8 3-4 6-8-3z" fill="#98b8e0"/><path d="M21 20l8 3-4 7-7-4z" fill="#ff8ab8"/><path d="M33 17v3l-8 10 4-7z" fill="#2a4ae0"/></svg>Effacer</button>
    <span class="spring"></span>
    <button class="tool" disabled><svg viewBox="0 0 36 30"><rect x="3.500" y="4.500" width="29" height="22" rx="2" fill="#c6cacd" stroke="#858a90" stroke-width="1.500"/><path d="M8 23L27 6l4-2-2 5L13 22z" fill="#75797d" stroke="#9a9ea2"/></svg>Tableau</button>
    <button class="tool"><svg viewBox="0 0 36 30"><circle cx="18" cy="15" r="15" fill="url(#g-earth)"/><path d="M7 7l6-2 3 3-3 2 4 2-4 4-5-1-3-3zM18 16l4-3 7-1 2 5-5 6-4-3-5 0zM8 22l6-1 5 6-4 2q-5-1-7-7z" fill="#a8d83c"/><path d="M12 2q6-3 11 0-5 3-11 0z" fill="#f2f6fa"/></svg>Web</button>
    <button class="tool"><svg viewBox="0 0 36 30"><path d="M3 27V3h9l2 3h13v20z" fill="#dcdce0" stroke="#555"/><path d="M6 9V5h8l2 3h13v5z" fill="#f0f0f2" stroke="#555"/><path d="M3 28L6 10h10l2-2h15v20z" fill="url(#g-silver)" stroke="#4c4e56"/></svg>Documents</button>
    <button class="tool"><svg viewBox="0 0 36 30"><path d="M5 24h26l2 5.500h-5L26 27H10l-2 2.500H3z" fill="#f2f2f2" stroke="#8a8a90"/><rect x="3" y=".8" width="30" height="23.500" rx="2" fill="#e8e8ea" stroke="#85858c" stroke-width="1.500"/><path d="M6 4h24v16H6z" fill="url(#g-screen)" stroke="#111" stroke-width="1.500"/></svg>Bureau</button>
    <button class="tool"><svg viewBox="0 0 36 30"><path d="M4 1h28q1 0 1 1v20q0 1-1 1H21l-5 6.500V23H4q-1 0-1-1V2q0-1 1-1z" fill="#f4f4f4" stroke="#666a78" stroke-width="1.500"/><circle cx="18" cy="12" r="7.500" fill="none" stroke="#555" stroke-width="3" stroke-dasharray="2 3.890"/><circle cx="18" cy="12" r="4.500" fill="#ccc" stroke="#555" stroke-width="2.500"/></svg>OpenBoard</button>
    <svg class="more" viewBox="0 0 6 3"><path d="M0 0h6L3 3z" fill="#666"/></svg>
  </footer>
</div>
</body>
</html>
```

FILE: styles.css
```css
* { box-sizing: border-box; }

body {
  margin: 0;
  padding: 20px;
  background: #fff;
  color: #444;
  font: 13px/17px "Noto Sans", "Open Sans", sans-serif;
}

button {
  margin: 0;
  padding: 0;
  border: 0;
  background: none;
  color: inherit;
  font: inherit;
}

svg { display: block; overflow: visible; }
p { margin: 0; }
.defs { position: absolute; }

.screen {
  position: relative;
  display: flex;
  flex-direction: column;
  min-height: calc(100vh - 40px);
  box-shadow: 0 2px 14px rgba(0, 0, 0, .55);
}

.workspace { display: flex; flex: 1; }

/* Board */
.board {
  position: relative;
  display: flex;
  flex: 1;
  flex-direction: column;
  min-width: 0;
  padding: 76px 167px 114px 231px;
  background: linear-gradient(#f0f0f0, #f0f0f0) 59px 0 / 8px 100% no-repeat #fff;
}

.tab {
  position: absolute;
  bottom: 15px;
  width: 30px;
  height: 50px;
  border: 2px solid #bebebe;
  background: #b4b4b4;
}
.tab svg { width: 30px; height: 50px; margin: -2px; }
.tab-left { left: 0; border-left: 0; border-radius: 0 6px 6px 0; }
.tab-left svg { margin-left: 0; }
.tab-right { right: 0; border-radius: 6px 0 0 6px; }

/* Widget window */
.widget {
  position: relative;
  display: flex;
  flex: 1;
  flex-direction: column;
  border: 20px solid #bfbfbf;
  border-radius: 10px;
  background: #fff;
  background-clip: padding-box;
}

.handles { position: absolute; display: flex; gap: 6px; }
.handles-top { top: -33px; left: -33px; }
.handles-bottom { bottom: -33px; left: 0; }
.round svg { width: 26px; height: 26px; }

.grip { position: absolute; }
.grip-top, .grip-bottom { left: 50%; width: 22px; height: 10px; margin-left: -11px; }
.grip-top { top: -19px; }
.grip-bottom { bottom: -19px; }
.grip-left, .grip-right { top: 50%; width: 10px; height: 22px; margin-top: -11px; }
.grip-left { left: -19px; }
.grip-right { right: -19px; }
.grip-corner { right: -19px; bottom: -19px; width: 18px; height: 18px; }

.formula {
  height: 327px;
  padding: 15px 14px 0 10px;
  color: #000;
  font: 54px/54px "Liberation Serif", serif;
}
.line { display: flex; align-items: baseline; justify-content: flex-start; gap: 12px; height: 54px; white-space: nowrap; }
.line > .var-f { margin-left: 14px; }
.line-fraction { align-items: flex-start; height: 111px; }
.lead { display: flex; align-items: baseline; gap: 16px; margin-top: 21px; }
.line-last { gap: 16px; margin-top: 73px; }

.math { font-size: 48px; }
.math i { margin: 0 3px; }
.math .var-f { margin: 0 7px; }
.math b { padding: 0 1px; font-weight: 400; }
.math .op { margin: 0 15px; }
.math sup { font-size: 34px; line-height: 0; vertical-align: 18px; }

.fraction { display: flex; flex-direction: column; align-items: center; line-height: 44px; }
.numerator { height: 54px; padding: 0 12px; border-bottom: 1px solid #000; }
.root { display: flex; margin-top: 10px; }
.radical { width: 35px; height: 48px; }
.radicand { border-top: 2px solid #000; }

.source {
  height: 206px;
  margin: 0 11px 0 5px;
  padding: 2px;
  border: 1px solid #000;
  border-radius: 0;
  outline: 0;
  background: #ededed;
  color: #000;
  font: 29px/40px "Noto Sans", sans-serif;
}

.actions {
  display: grid;
  grid-template-columns: repeat(5, 1fr);
  gap: 3px;
  margin-top: auto;
  padding: 0 20px 6px 6px;
}
.actions button {
  height: 28px;
  border: 1px solid #84888b;
  border-radius: 2px;
  background: linear-gradient(#4a4f53, #3b3f44);
  color: #eee;
}

/* Library */
.library {
  position: relative;
  display: flex;
  flex-direction: column;
  width: 260px;
  padding: 16px 16px 0;
  background: linear-gradient(#b8b8b8, #b8b8b8) 193px 0 / 8px 100% no-repeat #bfbfbf;
}

.crumbs, .shelf {
  border: 2px solid #999;
  border-radius: 9px;
  background: #eee;
  overflow: hidden;
}
.crumbs { height: 60px; margin-bottom: 5px; padding: 10px 1px 0; }
.path { display: flex; align-items: center; height: 29px; padding-left: 13px; }
.next { margin: 2px 3px 0 11px; }
.scroller { display: flex; gap: 4px; margin-top: 5px; }
.scroller button { display: grid; place-items: center; width: 20px; height: 11px; border: 2px solid #999; background: #b8b8b8; }
.scroll-thumb { flex: 1; height: 11px; border: 2px solid #999; background: #b8b8b8; }

.shelf { display: flex; flex: 1; flex-direction: column; justify-content: space-between; padding: 7px 6px 6px; }
.apps {
  display: grid;
  grid-template-columns: repeat(3, 60px);
  grid-auto-rows: 60px;
  margin: 0;
  padding: 0;
  list-style: none;
}
.apps a { display: flex; flex-direction: column; gap: 2px; color: #444; text-align: center; text-decoration: none; white-space: nowrap; }
.apps svg { width: 40px; height: 40px; margin: 0 auto; }
.apps .short svg { height: 38px; }
.selected a { color: #fff; background: linear-gradient(#3daee9, #3daee9) 0 100% / 100% 17px no-repeat; }
.apps .selected a { color: #fff; }

.zoom { width: 100%; height: 20px; margin: 0; appearance: none; background: none; }
.zoom::-webkit-slider-runnable-track { height: 12px; border: 1px solid #555; border-radius: 6px; background: #999; }
.zoom::-webkit-slider-thumb { width: 20px; height: 20px; margin-top: -5px; border: 1px solid #555; border-radius: 50%; appearance: none; background: #eee; }

.library-tools { display: flex; align-items: center; height: 63px; padding: 0 12px 11px 10px; }
.library-tools button + button { margin-left: 8px; }
.search { flex: 1; min-width: 0; height: 26px; margin: 0 10px 0 7px; padding: 0 10px; border: 2px solid #999; border-radius: 13px; outline: 0; background: #fff; }

.callout {
  position: absolute;
  top: 151px;
  left: 23px;
  width: 196px;
  height: 163px;
  border: 13px solid #e80000;
  border-radius: 50%;
  pointer-events: none;
}

/* Floating tools */
.palette-dock { position: absolute; right: 0; bottom: 74px; left: 0; display: flex; justify-content: center; pointer-events: none; }
.palette { display: flex; padding: 8px 3px; border: 5px solid #a9a9a9; border-radius: 10px; background: #bfbfbf; pointer-events: auto; }
.palette button { display: grid; place-items: center; width: 50px; height: 41px; }
.palette svg { width: 40px; height: 40px; }

/* Bottom bar */
.toolbar {
  display: flex;
  height: 69px;
  border-bottom: 1px solid #888;
  background: #b2b2b2;
}
.tool { display: flex; flex-direction: column; align-items: center; gap: 7px; min-width: 50px; padding: 7px 5px 0; }
.tool svg { width: 36px; height: 30px; }
.tool:disabled { color: #838383; }

.group { display: flex; flex-direction: column; align-items: center; min-width: 0; margin: 0 7px 0 9px; padding: 9px 0 0; border: 0; }
.caption { margin-top: 6px; }
.choices { display: flex; height: 29px; border: 1px solid #444; border-radius: 3px; background: linear-gradient(#d4d4d4 50%, #c2c2c2 50%); overflow: hidden; }
.choices label { display: grid; place-items: center; width: 28px; }
.choices input { position: absolute; opacity: 0; }
.choices label:has(:checked) { background: linear-gradient(#bcbcbc 50%, #b0b0b0 50%); box-shadow: -1px 0 #444, 1px 0 #444; }
.swatch { width: 12px; height: 12px; }
.black { background: #000; }
.red { background: #f00; }
.blue { background: #004080; }
.green { background: #008000; }
.yellow { background: #ffdd00; }
.stroke { width: 13px; background: #000; }
.thin { height: 2px; }
.medium { height: 4px; }
.thick { height: 8px; }
.dot { border-radius: 50%; background: #000; }
.small { width: 5px; height: 5px; }
.mid { width: 9px; height: 9px; }
.large { width: 15px; height: 15px; }

.divider { width: 1px; margin: 0 6px; border-left: 1px dotted #8a8a8a; }
.group + .divider { margin-left: 7px; }
.spring { flex: 1; }
.more { align-self: flex-end; width: 6px; height: 3px; margin: 0 6px 8px 2px; }
```
